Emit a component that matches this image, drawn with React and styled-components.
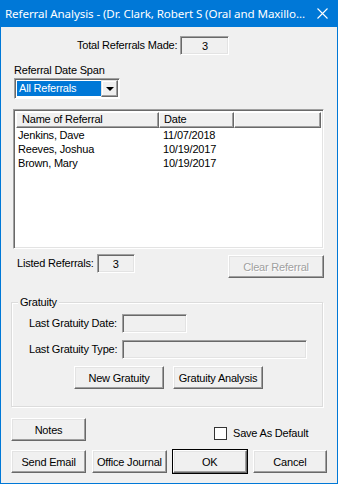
import React from 'react';
import styled, { createGlobalStyle } from 'styled-components';

const GlobalStyle = createGlobalStyle`
  html, body {
    margin: 0;
    padding: 0;
    background: #f0f0f0;
  }
  * {
    box-sizing: border-box;
  }
`;

const Window = styled.div`
  width: 338px;
  height: 484px;
  display: flex;
  flex-direction: column;
  background: #f0f0f0;
  border: 1px solid #0078d7;
  border-top: none;
  font-family: "Liberation Sans", Arial, sans-serif;
  font-size: 11px;
  letter-spacing: -0.2px;
  color: #000;
`;

const TitleBar = styled.div`
  height: 27px;
  margin: 0 -1px;
  background: #0078d7;
  color: #fff;
  display: flex;
  align-items: center;
  padding: 0 10px 0 5px;
  font-family: "Noto Sans", sans-serif;
  font-size: 11.6px;
  letter-spacing: -0.1px;
`;

const TitleText = styled.div`
  flex: 1;
  white-space: nowrap;
  overflow: hidden;
`;

const CloseIcon = styled.svg`
  width: 11px;
  height: 11px;
  margin-left: 10px;
`;

const Body = styled.div`
  flex: 1;
  display: flex;
  flex-direction: column;
  padding: 9px 10px 0 9px;
`;

const TotalRow = styled.div`
  display: flex;
  align-items: center;
  padding-left: 67px;
  gap: 3px;
`;

const Label = styled.span`
  white-space: nowrap;
  line-height: 13px;
`;

const Sunken = styled.div`
  width: ${p => p.w}px;
  height: ${p => p.h || 19}px;
  background: #f0f0f0;
  border: 1px solid;
  border-color: #a0a0a0 #fff #fff #a0a0a0;
  box-shadow: inset 1px 1px #696969, inset -1px -1px #e3e3e3;
  display: flex;
  align-items: center;
  justify-content: center;
`;

const SpanLabel = styled(Label)`
  display: block;
  margin: 9px 0 0 4px;
`;

const Combo = styled.div`
  margin: 1px 0 0 4px;
  width: 106px;
  height: 21px;
  background: #fff;
  border: 1px solid;
  border-color: #a0a0a0 #fff #fff #a0a0a0;
  box-shadow: inset 1px 1px #696969;
  display: flex;
  padding: 2px;
`;

const ComboValue = styled.div`
  flex: 1;
  background: #0078d7;
  color: #fff;
  line-height: 15px;
  padding-left: 2px;
`;

const ComboButton = styled.div`
  width: 17px;
  background: #f0f0f0;
  border: 1px solid;
  border-color: #e3e3e3 #696969 #696969 #e3e3e3;
  box-shadow: inset -1px -1px #a0a0a0, inset 1px 1px #fff;
  display: flex;
  align-items: center;
  justify-content: center;
  margin: -1px -1px -1px 0;
`;

const Arrow = styled.div`
  width: 0;
  height: 0;
  border-left: 4px solid transparent;
  border-right: 4px solid transparent;
  border-top: 4px solid #000;
`;

const ListBox = styled.div`
  margin: 10px 0 0 3px;
  width: 311px;
  height: 140px;
  background: #fff;
  border: 1px solid;
  border-color: #a0a0a0 #fff #fff #a0a0a0;
  box-shadow: inset 1px 1px #696969, inset -1px -1px #e3e3e3;
  padding: 2px;
`;

const HeaderRow = styled.div`
  display: grid;
  grid-template-columns: 143px 75px 1fr;
  height: 16px;
`;

const HeaderCell = styled.div`
  background: #f0f0f0;
  border: 1px solid;
  border-color: #fff #696969 #696969 #fff;
  box-shadow: inset -1px -1px #a0a0a0;
  padding-left: ${p => p.pad}px;
  line-height: 13px;
`;

const ItemRow = styled.div`
  display: grid;
  grid-template-columns: 145px 1fr;
  padding-left: 2px;
  line-height: 14px;
  &:first-of-type {
    margin-top: 1px;
  }
`;

const ListedRow = styled.div`
  display: flex;
  align-items: flex-start;
  margin-top: 5px;
  padding-left: 7px;
`;

const ListedLabel = styled(Label)`
  margin-top: 3px;
  margin-right: 3px;
`;

const Button = styled.button`
  width: ${p => p.w}px;
  height: 23px;
  padding: 0;
  background: #f0f0f0;
  border: 1px solid;
  border-color: #fff #696969 #696969 #fff;
  box-shadow: inset -1px -1px #a0a0a0, inset 1px 1px #e3e3e3;
  font-family: "Liberation Sans", Arial, sans-serif;
  font-size: 11px;
  letter-spacing: -0.2px;
  white-space: nowrap;
  color: ${p => p.disabled ? '#a0a0a0' : '#000'};
  text-shadow: ${p => p.disabled ? '1px 1px #fff' : 'none'};
  outline: ${p => p.primary ? '1px solid #000' : 'none'};
  outline-offset: 0;
`;

const ClearButton = styled(Button)`
  margin-left: auto;
  margin-top: 1px;
  margin-right: 3px;
`;

const Group = styled.div`
  position: relative;
  margin: 24px 4px 0 1px;
  height: 105px;
  border: 1px solid #dcdcdc;
  box-shadow: inset 1px 1px #fff, 1px 1px #fff;
  padding: 11px 0 0 17px;
`;

const Legend = styled.span`
  position: absolute;
  top: -7px;
  left: 6px;
  padding: 0 2px;
  background: #f0f0f0;
  line-height: 13px;
`;

const FieldRow = styled.div`
  display: flex;
  align-items: center;
  margin-bottom: 7px;
`;

const FieldLabel = styled(Label)`
  width: 93px;
`;

const GroupButtons = styled.div`
  display: flex;
  gap: 9px;
  padding-left: 45px;
  margin-top: 3px;
`;

const NotesRow = styled.div`
  display: flex;
  align-items: center;
  margin-top: 11px;
  padding-left: 1px;
`;

const Check = styled.div`
  width: 13px;
  height: 13px;
  background: #fff;
  border: 1px solid #333;
  margin: 8px 6px 0 128px;
`;

const CheckLabel = styled(Label)`
  margin-top: 7px;
`;

const BottomRow = styled.div`
  display: flex;
  gap: 6px;
  margin-top: 9px;
  padding-left: 1px;
`;

const referrals = [
  { name: 'Jenkins, Dave', date: '11/07/2018' },
  { name: 'Reeves, Joshua', date: '10/19/2017' },
  { name: 'Brown, Mary', date: '10/19/2017' },
];

const App = () => (
  <>
    <GlobalStyle />
    <Window>
      <TitleBar>
        <TitleText>Referral Analysis - (Dr. Clark, Robert S (Oral and Maxillo...</TitleText>
        <CloseIcon viewBox="0 0 11 11">
          <path d="M0.5 0.5 L10.5 10.5 M10.5 0.5 L0.5 10.5" stroke="#fff" strokeWidth="1.1" />
        </CloseIcon>
      </TitleBar>
      <Body>
        <TotalRow>
          <Label>Total Referrals Made:</Label>
          <Sunken w={49}>3</Sunken>
        </TotalRow>

        <SpanLabel>Referral Date Span</SpanLabel>
        <Combo>
          <ComboValue>All Referrals</ComboValue>
          <ComboButton><Arrow /></ComboButton>
        </Combo>

        <ListBox>
          <HeaderRow>
            <HeaderCell pad={5}>Name of Referral</HeaderCell>
            <HeaderCell pad={4}>Date</HeaderCell>
            <HeaderCell />
          </HeaderRow>
          {referrals.map(r => (
            <ItemRow key={r.name}>
              <span>{r.name}</span>
              <span>{r.date}</span>
            </ItemRow>
          ))}
        </ListBox>

        <ListedRow>
          <ListedLabel>Listed Referrals:</ListedLabel>
          <Sunken w={38} h={19}>3</Sunken>
          <ClearButton w={96} disabled>Clear Referral</ClearButton>
        </ListedRow>

        <Group>
          <Legend>Gratuity</Legend>
          <FieldRow>
            <FieldLabel>Last Gratuity Date:</FieldLabel>
            <Sunken w={65} />
          </FieldRow>
          <FieldRow>
            <FieldLabel>Last Gratuity Type:</FieldLabel>
            <Sunken w={185} />
          </FieldRow>
          <GroupButtons>
            <Button w={90}>New Gratuity</Button>
            <Button w={90}>Gratuity Analysis</Button>
          </GroupButtons>
        </Group>

        <NotesRow>
          <Button w={75}>Notes</Button>
          <Check />
          <CheckLabel>Save As Default</CheckLabel>
        </NotesRow>

        <BottomRow>
          <Button w={76}>Send Email</Button>
          <Button w={75}>Office Journal</Button>
          <Button w={75} primary>OK</Button>
          <Button w={75}>Cancel</Button>
        </BottomRow>
      </Body>
    </Window>
  </>
);

export default App;
